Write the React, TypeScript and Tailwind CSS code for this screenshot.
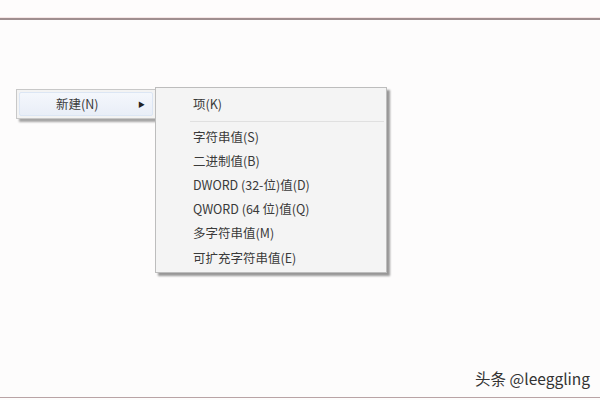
const items = ['字符串值(S)', '二进制值(B)', 'DWORD (32-位)值(D)', 'QWORD (64 位)值(Q)', '多字符串值(M)', '可扩充字符串值(E)'];

export default function App() {
  return (
    <div
      className="relative w-[600px] h-[400px] overflow-hidden flex flex-col bg-[#fdfcfc] text-[#3a3a3a]"
      style={{ fontFamily: '"Noto Sans CJK SC", "Liberation Sans", sans-serif' }}
    >
      <div className="h-[18px] bg-[#fefcfc] border-b border-[#f6e6e6]" />
      <div className="h-[2px] bg-[#a08e8f]" />

      <div className="flex-1" />

      <div className="flex justify-end pr-[10px] pb-[7px] text-[15.5px] text-[#333]">头条 @leeggling</div>
      <div className="h-[1px] bg-[#b9a3a5]" />
      <div className="h-[2px]" />

      {/* context menu */}
      <div className="absolute left-[16px] top-[89px] w-[140px] h-[30px] bg-[#f3f3f3] border border-[#c8c8c8] shadow-[3px_3px_2px_rgba(0,0,0,0.35)] p-[2px]">
        <div className="flex items-center h-full rounded-[2px] border border-[#dce6f4] bg-gradient-to-b from-[#f4f7fc] to-[#e9eef7] pl-[36px] pr-[7px] text-[12.5px]">
          <span>新建(N)</span>
          <span className="ml-auto text-[7px] text-[#222]">▶</span>
        </div>
      </div>

      {/* submenu */}
      <div className="absolute left-[155px] top-[87px] w-[232px] h-[186px] bg-[#f4f4f4] border border-[#bdbdbd] shadow-[3px_3px_2px_rgba(0,0,0,0.4)] pt-[3px]">
        <div className="h-[26px] flex items-center pl-[37px] text-[12.5px]">项(K)</div>
        <div className="ml-[34px] mr-[2px] mt-[4px] mb-[2px] h-[2px] border-t border-[#e0e0e0] border-b-white" />
        <div className="flex flex-col text-[12.5px] pl-[37px]">
          {items.map((t) => (
            <div key={t} className="h-[24.2px] flex items-center">
              {t}
            </div>
          ))}
        </div>
      </div>
    </div>
  );
}
